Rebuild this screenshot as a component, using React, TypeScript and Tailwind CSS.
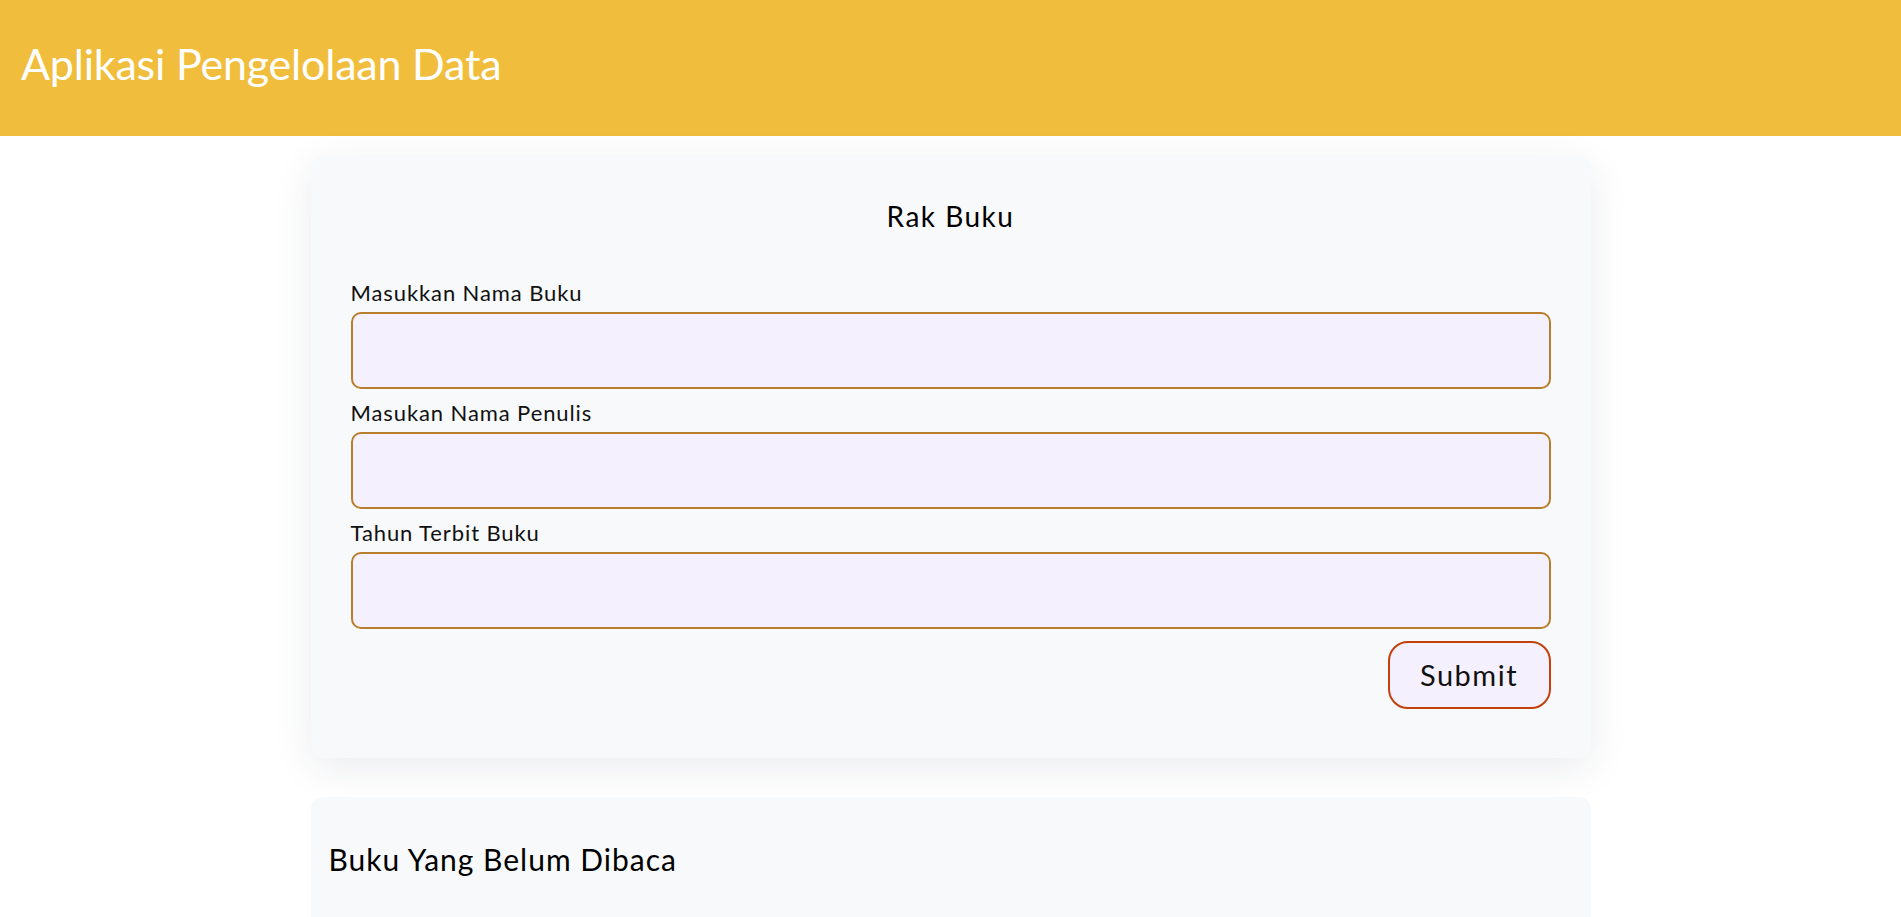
const fields = [
  { id: 'judul', label: 'Masukkan Nama Buku' },
  { id: 'penulis', label: 'Masukan Nama Penulis' },
  { id: 'tahun', label: 'Tahun Terbit Buku' },
]

export default function App() {
  return (
    <div className="min-h-screen bg-white font-['Lato',sans-serif] text-black">
      <header className="h-[136px] bg-[#f0be3c] pl-[21px] pt-[38px]">
        <h1 className="text-[43px] leading-[52px] tracking-[-0.2px] text-white">Aplikasi Pengelolaan Data</h1>
      </header>

      <main className="flex flex-col items-center pb-10">
        <section className="mt-5 w-[1280px] rounded-xl bg-[#f8f9fb] px-10 pt-[43px] pb-[49px] shadow-[0_10px_40px_rgba(30,40,80,0.09)]">
          <h2 className="mb-[46px] text-center text-[28px] leading-[34px] tracking-[1.5px]">Rak Buku</h2>
          <form onSubmit={(e) => e.preventDefault()}>
            {fields.map((f, i) => (
              <div key={f.id} className={i > 0 ? 'mt-[10px]' : ''}>
                <label htmlFor={f.id} className="mb-[6px] block text-[22px] leading-[27px] tracking-[0.9px] text-[#111]">
                  {f.label}
                </label>
                <input
                  id={f.id}
                  type="text"
                  className="block h-[77px] w-full rounded-[10px] border-2 border-[#b97d2d] bg-[#f5f0fe] px-4 text-[22px] outline-none"
                />
              </div>
            ))}
            <div className="mt-3 flex justify-end">
              <button
                type="submit"
                className="flex h-[68px] w-[163px] items-center justify-center rounded-[20px] border-2 border-[#c2410c] bg-[#f5f0fe] text-[29px] tracking-[1.5px] text-[#111]"
              >
                Submit
              </button>
            </div>
          </form>
        </section>

        <section className="mt-[39px] min-h-[300px] w-[1280px] rounded-xl bg-[#f8f9fb] pl-[18px] pr-5 pt-[44px]">
          <h2 className="text-[30px] leading-[36px] tracking-[1px]">Buku Yang Belum Dibaca</h2>
        </section>
      </main>
    </div>
  )
}
